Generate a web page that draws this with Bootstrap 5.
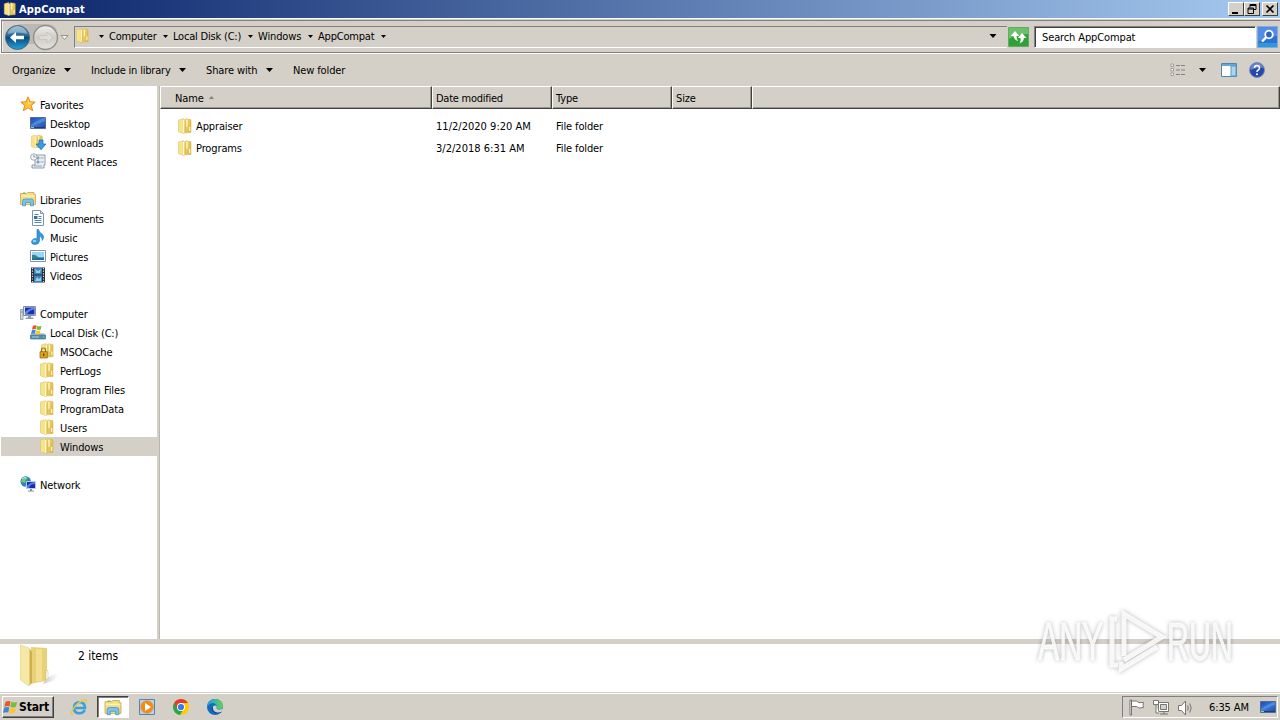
<!DOCTYPE html>
<html lang="en">
<head>
<meta charset="utf-8">
<title>AppCompat</title>
<link href="https://cdn.jsdelivr.net/npm/bootstrap@5.3.0/dist/css/bootstrap.min.css" rel="stylesheet">
<style>
:root{--face:#d4d0c8;--tah:"DejaVu Sans Condensed","DejaVu Sans",sans-serif}
body{width:1280px;height:720px;overflow:hidden;background:#fff;color:#000;font:11px/19px var(--tah);letter-spacing:-.12px;white-space:nowrap}
svg{display:block;flex:none}
.face{background:var(--face)}
.title-strip{height:18px;background:linear-gradient(90deg,#0a246a,#a6caf0);color:#fff;font-weight:700;font-size:11px;padding:0 2px 0 3px;letter-spacing:.12px;gap:2px}
.wbtn{width:16px;height:14px;background:var(--face);border:1px solid;border-color:#fff #404040 #404040 #fff}
.addr{height:36px;border-top:1px solid #fff;border-left:1px solid #fff;border-bottom:1px solid #fff;box-shadow:inset 0 -1px #808080,inset 0 1px var(--face),inset 0 2px #808080,inset 1px 0 #808080,inset 2px 0 #f2f0ec;padding:7px 2px 0 3px}
.pathbox{height:22px;width:933px;border-top:1px solid #808080;border-left:1px solid #808080;border-bottom:1px solid #fff;padding-bottom:2px}
.seg{justify-content:space-between}
.searchbox{width:222px;height:22px;background:#fff;border:1px solid #808080;border-right-color:#fff;border-bottom-color:#fff;box-shadow:inset 1px 1px #404040;padding-left:7px;font-size:11px;letter-spacing:-.12px}
.tools{height:32px}
.side{width:157px;padding:9px 0 0 1px}
.node{height:19px;gap:4px;line-height:17px}
.node:not(:empty){padding-top:2px}
.node svg{margin-top:-3px}
.node.l1{padding-left:19px}.node.l2{padding-left:29px}.node.l3{padding-left:38px;gap:5px}
.split{width:3px;border-right:1px solid #b9b6ad}
.hcell{height:23px;background:var(--face);border:1px solid;border-color:#fff #404040 #404040 #fff;box-shadow:inset -1px -1px #9a978f;padding-left:3px;line-height:23px}
.entry{height:22px}
.entry svg{margin-top:-1px}
.when{letter-spacing:.02px}
.tight{letter-spacing:-.2px}
.details{height:49px;border-bottom:1px solid var(--face)}
.taskbar{height:27px;border-top:1px solid #fff;padding-left:2px}
.startb{width:52px;height:22px;border:1px solid;border-color:#fff #404040 #404040 #fff;box-shadow:inset -1px -1px #808080;font-weight:700;font-size:12px;letter-spacing:-.15px}
.active-task{width:32px;height:22px;background:#fff;border:1px solid;border-color:#404040 #fff #fff #404040;box-shadow:inset 1px 1px #808080}
.tray{width:156px;height:22px;border:1px solid;border-color:#808080 #fff #fff #808080}
.wmark{left:1030px;top:602px;filter:drop-shadow(0 0 2px rgba(0,0,0,.33))}
</style>
</head>
<body class="d-flex flex-column">
<svg width="0" height="0" class="position-absolute" aria-hidden="true">
<defs>
<linearGradient id="gf" x1="0" x2="1" y1="0" y2=".5"><stop offset="0" stop-color="#f7e388"/><stop offset="1" stop-color="#dfba42"/></linearGradient>
<linearGradient id="gb" x1="0" x2="0" y1="0" y2="1"><stop offset="0" stop-color="#7fa9c4"/><stop offset=".45" stop-color="#1f6291"/><stop offset=".5" stop-color="#0b4a7c"/><stop offset="1" stop-color="#23a4e0"/></linearGradient>
<linearGradient id="gg" x1="0" x2="0" y1="0" y2="1"><stop offset="0" stop-color="#f0efec"/><stop offset=".5" stop-color="#cfccc6"/><stop offset="1" stop-color="#e4e2de"/></linearGradient>
<linearGradient id="gs" x1="0" x2="1" y1="0" y2="1"><stop offset="0" stop-color="#1c49b4"/><stop offset=".5" stop-color="#3a74d6"/><stop offset="1" stop-color="#1a47a0"/></linearGradient>
<symbol id="folder" viewBox="0 0 16 16"><path d="M1.500 2 6.500.7V15.300L1.500 13.800z" fill="#f8e488" stroke="#dcc266" stroke-width=".6"/><path d="M6.500 2.600 9 .8 14 1.800V14.500l-5 .3-2.500.5z" fill="url(#gf)" stroke="#d2b04a" stroke-width=".5"/><path d="M6.600 2v13M10 1.800v7" stroke="#fffbe0" stroke-width="1.100"/><path d="M8.300 2.500v11.500" stroke="#d9b848" stroke-width=".9"/><path d="M12.700 9v4" stroke="#fff" stroke-width="1"/></symbol>
<symbol id="star" viewBox="0 0 16 16"><path d="M8 .8l2 5 5.200.3-4 3.300 1.500 5.300L8 11.800l-4.700 2.900L4.800 9.400.8 6.100 6 5.800z" fill="#ffc53a" stroke="#e48a20" stroke-width="1"/><path d="M8 3l1 3.500 3.500.3L8 8z" fill="#ffe48b"/></symbol>
<symbol id="desk" viewBox="0 0 16 16"><path d="M.5 2.500h15v11H.5z" fill="url(#gs)" stroke="#526a94"/><path d="M1 10q6-5 14-7v3Q8 8 1 12z" fill="#5d9be8" opacity=".6"/><path d="M1 12.500h14" stroke="#2c3c60"/><path d="M1 12.500h3" stroke="#8ed06c"/></symbol>
<symbol id="down" viewBox="0 0 16 16"><use href="#folder" x="0" y="0" width="14" height="15"/><path d="M9 6h4v4h3l-5 5.800L6 10h3z" fill="#3b9be0" stroke="#1c67ad" stroke-width=".7"/></symbol>
<symbol id="recent" viewBox="0 0 16 16"><path d="M5 2h10v10h-1v3H2v-3h3z" fill="#e9eef3" stroke="#788794" stroke-width=".8"/><path d="M7 4h2v2H7zM7 8h2v2H7zM10.500 5h3M10.500 9h3M4 13h8" stroke="#7790a8" fill="#aec6dc" stroke-width=".8"/><circle cx="3.800" cy="4" r="3.200" fill="#f7f9fb" stroke="#8997a3" stroke-width=".8"/><path d="M3.800 2v2h1.700" fill="none" stroke="#567" stroke-width=".7"/></symbol>
<symbol id="lib" viewBox="0 0 16 16"><path d="M.5 2.500h6l1-1h6.500v2h1.500v10H.5z" fill="#f4df86" stroke="#c6a646" stroke-width=".8"/><path d="M1 5h14" stroke="#fff7c6"/><path d="M3 2h2.500" stroke="#72ae4b"/><path d="M2.500 14.800V10q0-2 2-2h7q2 0 2 2v4.800h-3V11.500h-5v3.300z" fill="#7cc2ea" stroke="#3f8cbf" stroke-width=".7"/></symbol>
<symbol id="doc" viewBox="0 0 16 16"><path d="M2.500.5h8l3 3v12h-11z" fill="#fff" stroke="#7e94ad"/><path d="M10.500.5v3h3" fill="#cfdceb" stroke="#7e94ad"/><path d="M4.500 4.500h4M4.500 10.500h7M4.500 12.500h7M8.500 6.500h3M8.500 8.500h3" stroke="#5682b6"/><path d="M4 6h3.500v3H4z" fill="#386cab"/></symbol>
<symbol id="music" viewBox="0 0 16 16"><path d="M8.500.5q.5 3 4 5 2.500 2.500-.2 6 .2-3.500-2.800-4.500V12q-.5 3.500-4.500 3.500-3.500 0-3.500-2.500t3.500-3.500q1 0 2 .4V.5z" fill="#3298df" stroke="#2374bb" stroke-width=".6"/><ellipse cx="4.500" cy="12" rx="1.800" ry="1.200" fill="#8fd0f6"/></symbol>
<symbol id="pic" viewBox="0 0 16 16"><path d="M.5 2.500h15v11H.5z" fill="#fff" stroke="#7e94a8"/><path d="M2 4h12v8H2z" fill="#9bd6f3"/><path d="M2 7q3-1 6 2 3 1 6 0v3H2z" fill="#2f8a7a"/><path d="M2 11q6-2 12-1v2H2z" fill="#2469a5"/></symbol>
<symbol id="vid" viewBox="0 0 16 16"><path d="M1 .5h14v15H1z" fill="#222c38"/><path d="M4 1h8v6.500H4zM4 8.500h8V15H4z" fill="#3f83b8"/><path d="M5 2l3 2 3-2-1 4H6zM5 14l2-4 2 2 2-2v4z" fill="#9bcbe8"/><path d="M2.500 1v14M13.500 1v14" stroke="#d7e1ea" stroke-width="1.200" stroke-dasharray="1.200 1.400"/></symbol>
<symbol id="comp" viewBox="0 0 16 16"><path d="M.5 4.500H3v10H.5z" fill="#d5dce3" stroke="#78899a" stroke-width=".7"/><path d="M1 7h1.500" stroke="#4cac3d"/><path d="M3.500 1.500h12v9h-12z" fill="#dbe3ea" stroke="#8392a1"/><path d="M5 2.500h9.500v7H5z" fill="#1c2fb4"/><path d="M5 7q4-4 9.500-4.500v2Q9 5 7 9.500H5z" fill="#5c86ea"/><path d="M8 11h3v1.500h2.500V14h-8v-1.500H8z" fill="#8d9cab"/></symbol>
<symbol id="flag" viewBox="0 0 16 16"><path d="M2.500 2.500Q5 .8 7.500 2L6.500 7Q4 6 1.300 7.500z" fill="#e9562a"/><path d="M8.300 2.300q2.500 1.500 5.700 0l-1 5q-3 1.300-5.700 0z" fill="#7fbb39"/><path d="M1.100 8.400q2.700-1.500 5.200-.3l-1.100 5q-2.700-1-5.200.4z" fill="#3f86d8"/><path d="M7.100 8.300q2.700 1.400 5.700.1l-1.200 4.900q-3 1.300-5.600 0z" fill="#fcc62c"/></symbol>
<symbol id="disk" viewBox="0 0 16 16"><path d="M2 9h12l1.500 2.500H.5z" fill="#b7cbd8"/><path d="M.5 11h15v4H.5z" fill="#4f90b2" stroke="#437489" stroke-width=".7"/><path d="M2 13h7" stroke="#a5d2e7"/><path d="M13 13h1.500" stroke="#61e74b"/><use href="#flag" x="1" y="0" width="12" height="12"/></symbol>
<symbol id="lock" viewBox="0 0 16 16"><use href="#folder" x="1" y="0" width="15" height="15"/><path d="M2.500 9V7q0-2 2-2t2 2v2" fill="none" stroke="#8f731e" stroke-width="1.200"/><path d="M1 8.700h7.300v6.300H1z" fill="#dda51b" stroke="#8b650c" stroke-width=".7"/><path d="M4.700 10.500v2.500" stroke="#513a09" stroke-width="1.300"/></symbol>
<symbol id="net" viewBox="0 0 16 16"><circle cx="5.700" cy="5.500" r="5.200" fill="#2782c4"/><path d="M2 3q3-3 6-1L6 4 5 7 1 6zM5 9l3 1-2 1z" fill="#6ecb66"/><path d="M2.500 2.500Q5 1 6.500 2" stroke="#d6f1fc" fill="none"/><path d="M6.500 5.500h9v7h-9z" fill="#1a2cac" stroke="#c0ccda"/><path d="M7 10q3-4 8-4v2q-5 0-6 4H7z" fill="#527eea"/><path d="M10 13h2v1.500h2v1H8v-1h2z" fill="#8294aa"/></symbol>
<symbol id="tri" viewBox="0 0 7 4"><path d="M0 0h7L3.500 4z"/></symbol>
<symbol id="tri5" viewBox="0 0 5 3"><path d="M0 0h5L2.500 3z"/></symbol>
</defs></svg>

<header class="title-strip d-flex align-items-center">
<svg width="14" height="16"><use href="#folder" width="14" height="16"/></svg><span>AppCompat</span>
<div class="d-flex ms-auto">
<div class="wbtn"><svg width="14" height="12"><path d="M3 9h6v2H3z"/></svg></div>
<div class="wbtn"><svg width="14" height="12"><path d="M5 1.500h6v5H9M5 2.500h6M5 1.500v3M3 5h5.500v5.500H3zM3 6h5.500" fill="none" stroke="#000"/></svg></div>
<div class="wbtn" style="margin-left:2px"><svg width="14" height="12"><path d="M3.500 2.500l7 7M10.500 2.500l-7 7" stroke="#000" stroke-width="1.700"/></svg></div>
</div>
</header>

<nav class="addr face d-flex">
<svg width="70" height="28" style="margin-top:-3px"><path d="M14 1h28q8 0 11 6-5 5-8 14H18z" fill="#bbb9b5"/><circle cx="13.500" cy="14.500" r="12" fill="url(#gb)" stroke="#48687d"/><path d="M3.500 11q2-7 10-8 8 1 10 8-10-3-20 0z" fill="#c3d9e6" opacity=".5"/><path d="M6 14.500l6-5.500v3.700h8v3.600h-8V20z" fill="#fff"/><circle cx="41.500" cy="14.500" r="12" fill="url(#gg)" stroke="#8e8d8a" stroke-width="1.300"/><path d="M49 14.500L43 9v3.700h-8v3.600h8V20z" fill="#dedcd8" stroke="#c0beb9" stroke-width=".7"/><path d="M57 12.500h7l-3.500 4z" fill="#f5f4f2" stroke="#8b8984" stroke-width=".9"/></svg>
<div class="pathbox d-flex align-items-center">
<svg width="16" height="18"><use href="#folder" width="15" height="17"/></svg>
<svg width="5" height="3" style="margin:0 5px 0 8px"><use href="#tri5"/></svg>
<div class="seg tight d-flex align-items-center" style="width:59px">Computer<svg width="5" height="3"><use href="#tri5"/></svg></div>
<div class="seg tight d-flex align-items-center" style="width:80px;margin-left:5px">Local Disk (C:)<svg width="5" height="3"><use href="#tri5"/></svg></div>
<div class="seg d-flex align-items-center" style="width:55px;margin-left:5px">Windows<svg width="5" height="3"><use href="#tri5"/></svg></div>
<div class="seg tight d-flex align-items-center" style="width:68px;margin-left:5px">AppCompat<svg width="5" height="3"><use href="#tri5"/></svg></div>
<svg width="8" height="4" class="ms-auto" style="margin-right:10px"><use href="#tri"/></svg>
</div>
<svg width="22" height="22" style="margin-left:1px"><path d="M.5 1.500h20v19H.5z" fill="#2fa136" stroke="#66a867"/><path d="M1 2h19v6Q8 8 1 13z" fill="#79c879" opacity=".8"/><path d="M7 5L2.800 10H5.500q.5 4 4.500 5-1.500-2-1.300-5h2.500zM14 7l4.500 5H16q-.5 4-4.500 5.500Q13 15 12.500 12H9.800z" fill="#fff"/></svg>
<div class="searchbox d-flex align-items-center ms-auto">Search AppCompat</div>
<svg width="22" height="22"><path d="M1.500.5h20v21h-20z" fill="#2b72d4" stroke="#83abe0"/><path d="M2 1h19v9Q9 11 2 16z" fill="#6394e8" opacity=".75"/><path d="M2 17h19v4H2z" fill="#35b9ec" opacity=".5"/><circle cx="13" cy="8.500" r="3.800" fill="#2f62c1" stroke="#fff" stroke-width="1.800"/><path d="M10 11.500l-4 4" stroke="#fff" stroke-width="2.400"/></svg>
</nav>

<div class="tools face d-flex align-items-center">
<div class="seg d-flex align-items-center" style="width:59px;margin-left:12px"><span>Organize</span><svg width="7" height="4"><use href="#tri"/></svg></div>
<div class="seg tight d-flex align-items-center" style="width:95px;margin-left:20px"><span>Include in library</span><svg width="7" height="4"><use href="#tri"/></svg></div>
<div class="seg d-flex align-items-center" style="width:67px;margin-left:20px"><span>Share with</span><svg width="7" height="4"><use href="#tri"/></svg></div>
<span style="margin-left:20px">New folder</span>
<svg width="110" height="20" class="ms-auto"><g fill="#fff" stroke="#8a8a8a" stroke-width=".8"><path d="M1 4h2.500v2.500H1zM1 8.500h2.500V11H1zM1 13h2.500v2.500H1z"/></g><path d="M6 5.500h4m1 0h4M6 10h4m1 0h4M6 14.500h4m1 0h4" stroke="#85837e"/><use href="#tri" x="29" y="8" width="7" height="4"/><path d="M51.500 3.500h15v13h-15z" fill="#fff" stroke="#5484aa"/><path d="M52 4h14v2H52z" fill="#6aa6d0"/><path d="M61 6h5v10h-5z" fill="#a7d9ee" stroke="#5a9ac2"/><circle cx="87" cy="10" r="7.500" fill="#2548b0" stroke="#8190ad"/><path d="M80.500 8q2-5 6.500-5t6.500 5q-6-1-13 2z" fill="#8daae9" opacity=".6"/><path d="M84.500 8q0-2.500 2.500-2.500T89.500 8q0 1.200-1.300 2Q87 10.700 87 12" fill="none" stroke="#fff" stroke-width="1.500"/><circle cx="87" cy="14.300" r="1" fill="#fff"/></svg>
</div>

<main class="d-flex" style="height:553px">
<aside class="side">
<div class="node l1 d-flex align-items-center"><svg width="16" height="16"><use href="#star"/></svg>Favorites</div>
<div class="node l2 d-flex align-items-center"><svg width="16" height="16"><use href="#desk"/></svg>Desktop</div>
<div class="node l2 d-flex align-items-center"><svg width="16" height="16"><use href="#down"/></svg>Downloads</div>
<div class="node l2 d-flex align-items-center"><svg width="16" height="16"><use href="#recent"/></svg>Recent Places</div>
<div class="node"></div>
<div class="node l1 tight d-flex align-items-center"><svg width="16" height="16"><use href="#lib"/></svg>Libraries</div>
<div class="node l2 tight d-flex align-items-center" style="letter-spacing:-.3px"><svg width="16" height="16"><use href="#doc"/></svg>Documents</div>
<div class="node l2 d-flex align-items-center"><svg width="16" height="16"><use href="#music"/></svg>Music</div>
<div class="node l2 d-flex align-items-center"><svg width="16" height="16"><use href="#pic"/></svg>Pictures</div>
<div class="node l2 d-flex align-items-center"><svg width="16" height="16"><use href="#vid"/></svg>Videos</div>
<div class="node"></div>
<div class="node l1 tight d-flex align-items-center"><svg width="16" height="16"><use href="#comp"/></svg>Computer</div>
<div class="node l2 tight d-flex align-items-center"><svg width="16" height="16"><use href="#disk"/></svg>Local Disk (C:)</div>
<div class="node l3 d-flex align-items-center"><svg width="16" height="16"><use href="#lock"/></svg>MSOCache</div>
<div class="node l3 d-flex align-items-center"><svg width="16" height="16"><use href="#folder"/></svg>PerfLogs</div>
<div class="node l3 d-flex align-items-center"><svg width="16" height="16"><use href="#folder"/></svg>Program Files</div>
<div class="node l3 d-flex align-items-center"><svg width="16" height="16"><use href="#folder"/></svg>ProgramData</div>
<div class="node l3 d-flex align-items-center"><svg width="16" height="16"><use href="#folder"/></svg>Users</div>
<div class="node l3 d-flex align-items-center face"><svg width="16" height="16"><use href="#folder"/></svg>Windows</div>
<div class="node"></div>
<div class="node l1 d-flex align-items-center"><svg width="16" height="16"><use href="#net"/></svg>Network</div>
</aside>
<div class="split face"></div>
<section class="flex-grow-1">
<div class="d-flex">
<div class="hcell d-flex" style="width:272px;padding-left:14px">Name<svg width="5" height="3" style="margin:9px 0 0 5px"><path d="M0 3h5L2.500 0z" fill="#858078"/></svg></div>
<div class="hcell" style="width:120px;letter-spacing:-.25px">Date modified</div>
<div class="hcell" style="width:120px">Type</div>
<div class="hcell" style="width:80px">Size</div>
<div class="hcell flex-grow-1"></div>
</div>
<div style="padding:6px 0 0 17px">
<div class="entry d-flex align-items-center"><svg width="16" height="16"><use href="#folder"/></svg><span style="width:240px;margin-left:3px">Appraiser</span><span class="when" style="width:120px">11/2/2020 9:20 AM</span><span>File folder</span></div>
<div class="entry d-flex align-items-center"><svg width="16" height="16"><use href="#folder"/></svg><span style="width:240px;margin-left:3px">Programs</span><span class="when" style="width:120px">3/2/2018 6:31 AM</span><span>File folder</span></div>
</div>
</section>
</main>
<div class="face" style="height:5px"></div>

<footer class="details d-flex">
<svg width="60" height="48"><defs><linearGradient id="sh"><stop offset="0" stop-color="#999"/><stop offset="1" stop-color="#fff"/></linearGradient></defs><path d="M45 36q10-8 13-5 0 5-15 9z" fill="url(#sh)" opacity=".5"/><path d="M31 3l16 1v31l-1.500 2L30 40z" fill="#e8d178"/><path d="M36 5h6v32l-6 1z" fill="#f2df91"/><path d="M20.500 1l8.500 3q2 1 2 4v32l-2 2-8.500-6z" fill="#f7e8a5" stroke="#e6d389" stroke-width=".7"/><path d="M29.500 5l2.500 3v31l-2.500 2z" fill="#cfb050"/><path d="M46 26q2 0 2 2v7l-2 1z" fill="#fff" stroke="#c8b368" stroke-width=".5"/></svg>
<div style="margin:3px 0 0 18px;font-size:12px;letter-spacing:-.05px">2 items</div>
</footer>

<div class="taskbar face d-flex align-items-start" style="padding-top:2px">
<div class="startb d-flex align-items-center"><svg width="16" height="17"><use href="#flag"/></svg>Start</div>
<svg width="18" height="18" style="margin:2px 0 0 16px"><path d="M14.800 12Q13.300 15.300 9.500 15.300 4 15.300 4 9.700T9.500 4.200q5.500 0 5.500 5.800H5" fill="none" stroke="#3aa0dc" stroke-width="2.500"/><path d="M3 16.500Q0 17 2.500 12 7 4.500 14 2q4-1 2 3.500" fill="none" stroke="#e8c646" stroke-width="1.400"/></svg>
<div class="active-task d-flex align-items-center justify-content-center" style="margin-left:9px"><svg width="18" height="17"><use href="#lib"/></svg></div>
<svg width="18" height="18" style="margin:2px 0 0 9px"><path d="M1.500 1.500h15v15h-15z" fill="#b7d4ec" stroke="#5185b8"/><circle cx="9" cy="9" r="6.500" fill="#f28b1c" stroke="#d1ab77" stroke-width=".7"/><path d="M7 5l6 4-6 4z" fill="#fff"/></svg>
<svg width="18" height="18" style="margin:2px 0 0 16px"><circle cx="9" cy="9" r="8" fill="#fc0"/><path d="M2.100 5A8 8 0 0 1 15.900 5H9z" fill="#e33b2e"/><path d="M2.100 5A8 8 0 0 0 8 17l3.500-6L9 9z" fill="#2da44e"/><path d="M2.100 5L5.500 11 9 5z" fill="#e33b2e"/><circle cx="9" cy="9" r="4" fill="#fff"/><circle cx="9" cy="9" r="3.100" fill="#3b78e7"/></svg>
<svg width="18" height="18" style="margin:2px 0 0 16px"><defs><linearGradient id="ed"><stop offset="0" stop-color="#1c9fe0"/><stop offset="1" stop-color="#66cf58"/></linearGradient></defs><circle cx="9" cy="9" r="8" fill="#126bbd"/><path d="M1 9Q2 1 9.500 1 17 1.500 17 8q-.5 3.500-4 3.500-2.500 0-2.500-1.500 1-1 .3-2.500Q9.500 5 6.500 5 3 5.500 1 9z" fill="url(#ed)"/><path d="M7 8.500q-1 4.500 3 6 3 .7 6-1.500l-1 1.800Q9 17 6 12.500 5 10 7 8.500z" fill="#0b468d"/><path d="M10.500 10q0 1.700 2.500 1.700 2.500 0 4.500-1.700l-1.500 3.500q-5 2-8-.5-1.500-2-1-4.500Q8.500 7 10.800 8z" fill="#d4d0c8"/></svg>
<div class="tray d-flex align-items-center ms-auto" style="margin-right:2px;padding-left:5px">
<svg width="68" height="20"><g fill="#fff" stroke="#6b6965" stroke-width=".9"><path d="M2 3h1.500v15H2zM3.500 4h5q1.500 2.500 7 1.500-1 3 0 5-5 1.500-7-1h-5z"/><path d="M30.500 5.500h10v9h-10zM32 17h8M36 15v2"/><path d="M32.500 7.500h6v5h-6z" fill="#d0d0d0"/><path d="M25.500 3.500h5v4h-5zM28 8v8h3"/><path d="M50.500 8.500h3l4-4.500v14l-4-4.500h-3z"/><path d="M59.500 8.500q1.600 2.500 0 5M61.700 6.500q3 4.500 0 9" fill="none"/></g></svg>
<span style="margin-left:13px">6:35 AM</span>
<svg width="16" height="16" style="margin-left:auto;margin-right:1px"><use href="#desk"/></svg>
</div>
</div>

<svg class="wmark position-absolute" width="232" height="76">
<g fill="#fff" fill-opacity=".85" stroke="#fff" stroke-opacity=".7" stroke-width="1" font-family="'Liberation Sans',sans-serif" font-size="53"><text transform="translate(8 58) scale(.6 1)">ANY</text><text transform="translate(137 58) scale(.575 1)">RUN</text></g>
<g fill="none" stroke="#fff" stroke-opacity=".85" stroke-width="5"><path d="M94 54V12l38 23-38 23M87 17h-5v46h6M91 60v7l36-22"/></g>
</svg>
<script src="https://cdn.jsdelivr.net/npm/bootstrap@5.3.0/dist/js/bootstrap.bundle.min.js"></script>
</body>
</html>
